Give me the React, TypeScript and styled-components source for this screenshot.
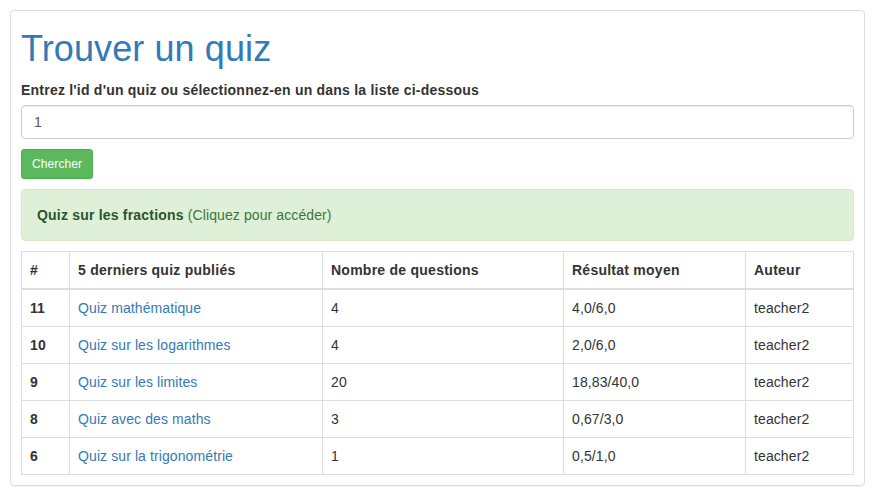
import styled, { createGlobalStyle } from "styled-components";

type Quiz = {
  id: number;
  title: string;
  questions: number;
  result: string;
  author: string;
};

const quizzes: Quiz[] = [
  { id: 11, title: "Quiz mathématique", questions: 4, result: "4,0/6,0", author: "teacher2" },
  { id: 10, title: "Quiz sur les logarithmes", questions: 4, result: "2,0/6,0", author: "teacher2" },
  { id: 9, title: "Quiz sur les limites", questions: 20, result: "18,83/40,0", author: "teacher2" },
  { id: 8, title: "Quiz avec des maths", questions: 3, result: "0,67/3,0", author: "teacher2" },
  { id: 6, title: "Quiz sur la trigonométrie", questions: 1, result: "0,5/1,0", author: "teacher2" },
];

const columns = [
  { label: "#", width: 48 },
  { label: "5 derniers quiz publiés", width: 253 },
  { label: "Nombre de questions", width: 241 },
  { label: "Résultat moyen", width: 182 },
  { label: "Auteur", width: 108 },
];

export default function App() {
  return (
    <>
      <GlobalStyle />
      <Page>
        <Panel>
          <Title>Trouver un quiz</Title>
          <Label htmlFor="quiz-id">
            Entrez l'id d'un quiz ou sélectionnez-en un dans la liste ci-dessous
          </Label>
          <Input id="quiz-id" defaultValue="1" />
          <SearchButton type="button">Chercher</SearchButton>
          <Alert>
            <strong>Quiz sur les fractions</strong> (Cliquez pour accéder)
          </Alert>
          <Table>
            <thead>
              <tr>
                {columns.map(col => (
                  <Th key={col.label} style={{ width: col.width }}>
                    {col.label}
                  </Th>
                ))}
              </tr>
            </thead>
            <tbody>
              {quizzes.map(quiz => (
                <tr key={quiz.id}>
                  <Td $bold>{quiz.id}</Td>
                  <Td>
                    <QuizLink href="#">{quiz.title}</QuizLink>
                  </Td>
                  <Td>{quiz.questions}</Td>
                  <Td>{quiz.result}</Td>
                  <Td>{quiz.author}</Td>
                </tr>
              ))}
            </tbody>
          </Table>
        </Panel>
      </Page>
    </>
  );
}

const GlobalStyle = createGlobalStyle`
  body {
    margin: 0;
    background: #fff;
    font-family: "Liberation Sans", Arial, sans-serif;
    font-size: 14px;
    line-height: 20px;
    color: #333;
    letter-spacing: 0.1px;
  }
  * {
    box-sizing: border-box;
  }
`;

const Page = styled.div`
  padding: 10px;
  width: 875px;
`;

const Panel = styled.section`
  width: 855px;
  border: 1px solid #ddd;
  border-radius: 4px;
  box-shadow: 0 1px 1px rgba(0, 0, 0, 0.05);
  padding: 0 10px 10px;
  display: flex;
  flex-direction: column;
  align-items: flex-start;
`;

const Title = styled.h1`
  margin: 18px 0 11px;
  font-size: 36px;
  font-weight: 500;
  line-height: 1.1;
  letter-spacing: 0.1px;
  color: #337ab7;
`;

const Label = styled.label`
  font-weight: bold;
  letter-spacing: 0.22px;
  margin-bottom: 5px;
`;

const Input = styled.input`
  width: 100%;
  height: 34px;
  padding: 6px 12px;
  font-family: inherit;
  font-size: 14px;
  color: #555;
  border: 1px solid #ccc;
  border-radius: 4px;
  box-shadow: inset 0 1px 1px rgba(0, 0, 0, 0.075);
  margin-bottom: 10px;
  outline: none;
`;

const SearchButton = styled.button`
  height: 30px;
  padding: 5px 10px;
  font-family: inherit;
  font-size: 12px;
  line-height: 18px;
  letter-spacing: 0.1px;
  color: #fff;
  background: #5cb85c;
  border: 1px solid #4cae4c;
  border-radius: 3px;
  margin-bottom: 10px;
`;

const Alert = styled.div`
  width: 100%;
  padding: 15px;
  color: #3c763d;
  background: #dff0d8;
  border: 1px solid #d6e9c6;
  border-radius: 4px;
  margin-bottom: 10px;

  strong {
    font-weight: bold;
    color: #2b542c;
    letter-spacing: 0.2px;
  }
`;

const Table = styled.table`
  width: 100%;
  border-collapse: collapse;
  border-spacing: 0;
  border: 1px solid #ddd;
`;

const Th = styled.th`
  text-align: left;
  padding: 8px;
  border: 1px solid #ddd;
  border-bottom-width: 2px;
  font-weight: bold;
  letter-spacing: 0.25px;
`;

const Td = styled.td<{ $bold?: boolean }>`
  padding: 8px;
  border: 1px solid #ddd;
  font-weight: ${p => (p.$bold ? "bold" : "normal")};
`;

const QuizLink = styled.a`
  color: #337ab7;
  text-decoration: none;
`;
